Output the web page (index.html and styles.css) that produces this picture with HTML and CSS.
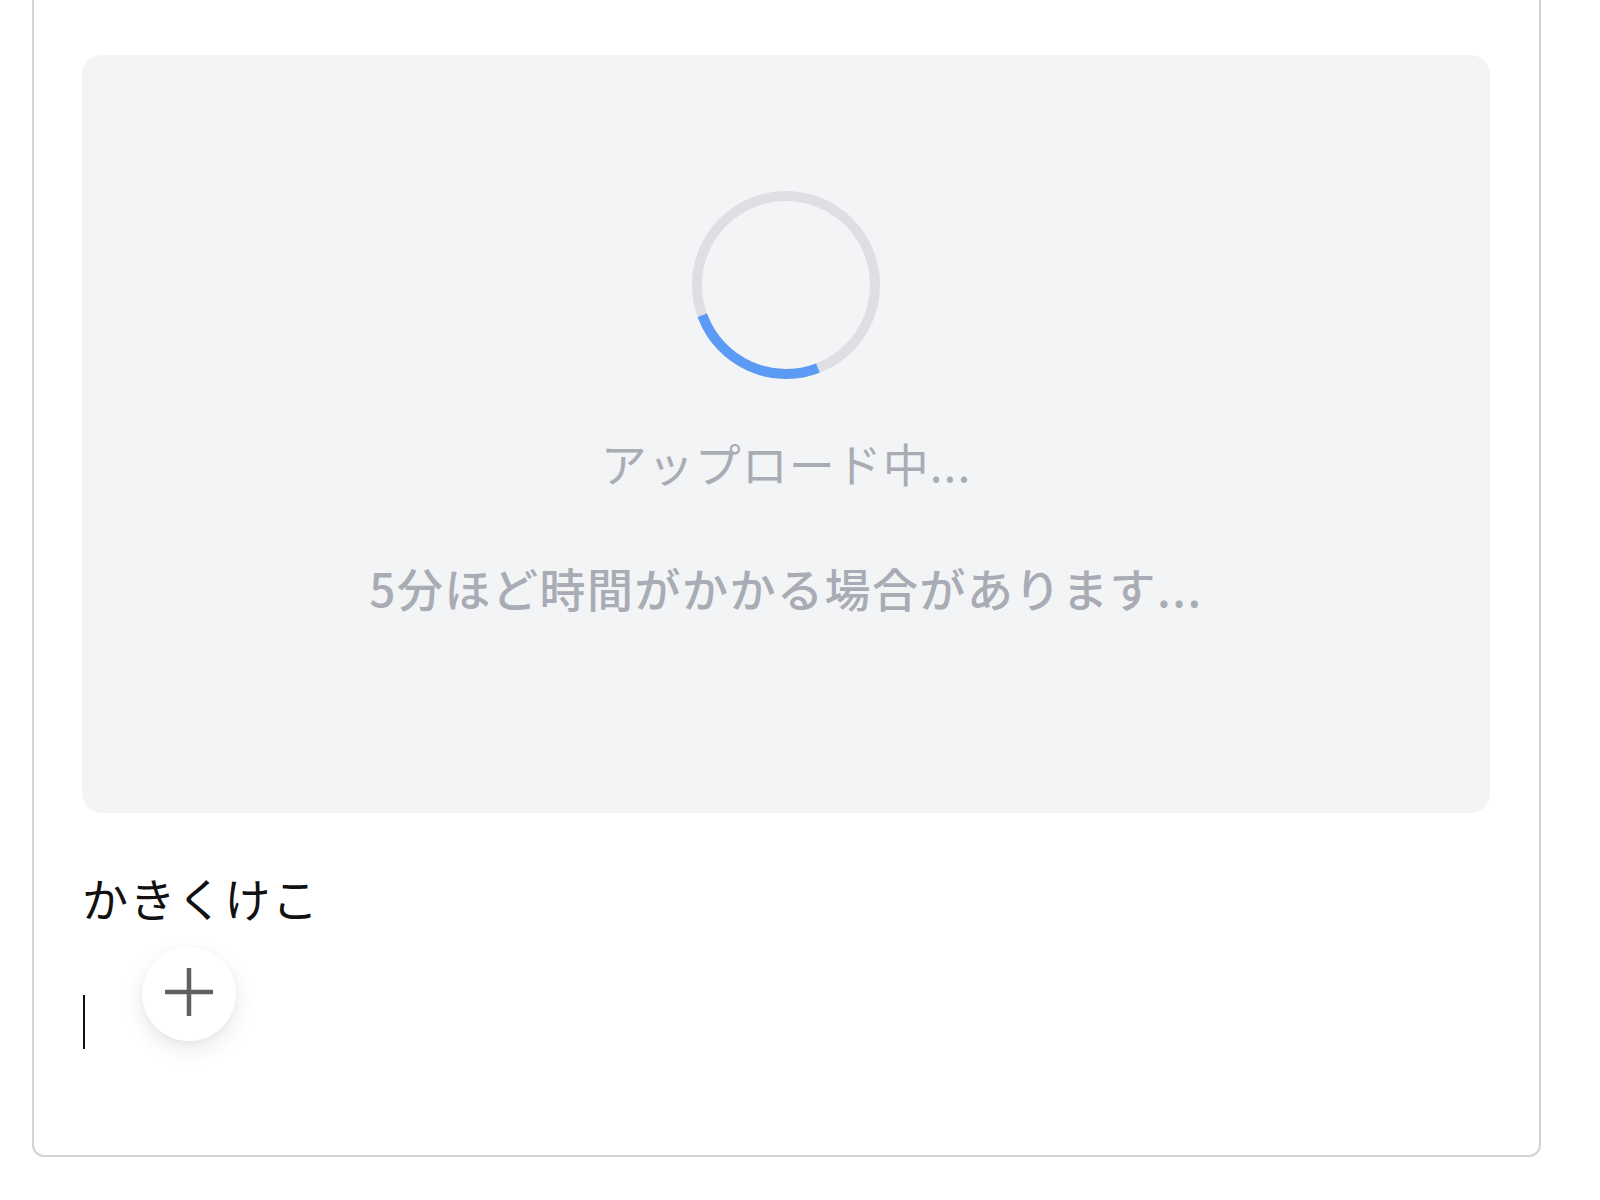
FILE: index.html
```html
<!DOCTYPE html>
<html lang="ja">
<head>
<meta charset="utf-8">
<title>Upload</title>
<link rel="stylesheet" href="styles.css">
</head>
<body>
<div class="card">
  <div class="upload-panel">
    <svg class="spinner" width="188" height="188" viewBox="0 0 188 188">
      <circle cx="94" cy="94" r="89" fill="none" stroke="#dedfe2" stroke-width="10"/>
      <circle cx="94" cy="94" r="89" fill="none" stroke="#5b9bf5" stroke-width="10" stroke-dasharray="141.4 600" transform="rotate(69 94 94)"/>
    </svg>
    <div class="status">アップロード中...</div>
    <div class="note">5分ほど時間がかかる場合があります...</div>
  </div>
  <div class="editor">
    <p class="line">かきくけこ</p>
    <div class="caret-line">
      <span class="caret"></span>
      <button class="add-btn" type="button" aria-label="追加">
        <svg width="48" height="48" viewBox="0 0 48 48"><path d="M24 1v46M1 24h46" stroke="#606060" stroke-width="4.5" stroke-linecap="round" fill="none"/></svg>
      </button>
    </div>
  </div>
</div>
</body>
</html>
```
FILE: styles.css
```css
html, body {
  margin: 0;
  padding: 0;
  background: #ffffff;
  font-family: "Noto Sans CJK JP", "Noto Sans", sans-serif;
}
body {
  height: 1200px;
  overflow: hidden;
}
.card {
  box-sizing: border-box;
  width: 1509px;
  margin: -40px 0 0 32px;
  padding: 93px 49px 106px 48px;
  border: 2px solid #d3d3d3;
  border-radius: 12px;
  background: #fff;
}
.upload-panel {
  box-sizing: border-box;
  height: 758px;
  padding-top: 136px;
  background: #f3f4f6;
  border-radius: 20px;
  display: flex;
  flex-direction: column;
  align-items: center;
}
.spinner {
  display: block;
}
.status {
  margin-top: 49px;
  font-size: 46px;
  line-height: 69px;
  color: #a9acb4;
  font-weight: 400;
  letter-spacing: 1px;
}
.note {
  margin-top: 56px;
  font-size: 46px;
  line-height: 69px;
  color: #a9acb4;
  font-weight: 500;
  letter-spacing: 1.5px;
}
.editor {
  padding: 0;
}
.line {
  margin: 51px 0 0 0;
  font-size: 46px;
  line-height: 66px;
  color: #111;
  letter-spacing: 1.5px;
}
.caret-line {
  position: relative;
  height: 54px;
  margin-top: 65px;
}
.caret {
  display: block;
  width: 2px;
  height: 54px;
  margin-left: 1px;
  background: #111;
}
.add-btn {
  position: absolute;
  left: 60px;
  top: -48px;
  width: 94px;
  height: 94px;
  padding: 0;
  border: none;
  border-radius: 50%;
  background: #fff;
  box-shadow: 0 8px 22px rgba(0, 0, 0, 0.09), 0 2px 6px rgba(0, 0, 0, 0.04);
  display: flex;
  align-items: center;
  justify-content: center;
}
.add-btn svg {
  display: block;
  margin-top: -4px;
}
```
